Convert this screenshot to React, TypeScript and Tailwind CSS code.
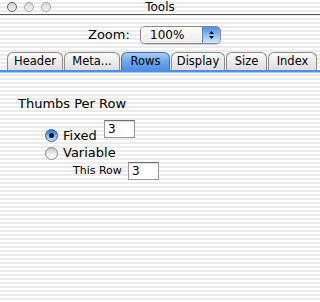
import React from 'react';

const tabs = [
  { label: 'Header', w: 'w-[56px]', active: false },
  { label: 'Meta...', w: 'w-[56px]', active: false },
  { label: 'Rows', w: 'w-[49px]', active: true },
  { label: 'Display', w: 'w-[54px]', active: false },
  { label: 'Size', w: 'w-[41px]', active: false },
  { label: 'Index', w: 'w-[49px]', active: false },
];

function Light() {
  return (
    <div className="w-[10px] h-[10px] rounded-full border border-[#a8a8a8] bg-gradient-to-b from-[#d8d8d8] to-[#f4f4f4]" />
  );
}

function Radio({ on }: { on: boolean }) {
  if (on) {
    return (
      <div className="w-[13px] h-[13px] rounded-full border border-[#3b5f9a] bg-gradient-to-b from-[#2f6fd0] via-[#7fb2f0] to-[#c8e2ff] flex items-center justify-center">
        <div className="w-[5px] h-[5px] rounded-full bg-[#101830]" />
      </div>
    );
  }
  return (
    <div className="w-[13px] h-[13px] rounded-full border border-[#8a8a8a] bg-gradient-to-b from-[#c4c4c4] via-[#ededed] to-white" />
  );
}

function Field({ value }: { value: string }) {
  return (
    <div className="w-[31px] h-[18px] bg-white border border-[#9a9a9a] border-t-[#6e6e6e] shadow-[inset_0_1px_1px_rgba(0,0,0,0.15)] text-[12px] leading-[16px] pl-[3px]">
      {value}
    </div>
  );
}

export default function App() {
  return (
    <div className="w-[320px] h-[302px] overflow-hidden text-black font-['DejaVu_Sans',sans-serif] bg-[repeating-linear-gradient(to_bottom,#ffffff_0px,#ffffff_2px,#ebebeb_2px,#ebebeb_4px)]">
      {/* title bar */}
      <div className="h-[15px] border-b border-[#5a5a5a] flex items-center">
        <div className="w-[60px] flex items-center gap-[7px] pl-[7px]">
          <div className="w-[10px] h-[10px] rounded-full border-[1.5px] border-[#606060] bg-gradient-to-b from-[#cfcfcf] to-[#f2f2f2]" />
          <Light />
          <Light />
        </div>
        <div className="flex-1 text-center text-[12px] leading-[14px]">Tools</div>
        <div className="w-[60px]" />
      </div>

      {/* zoom row */}
      <div className="flex items-center pl-[88px] pt-[11px] h-[36px] pb-[7px]">
        <span className="text-[13px] w-[52px]">Zoom:</span>
        <div className="w-[81px] h-[18px] rounded-[5px] border border-[#8a8a8a] flex overflow-hidden shadow-[0_1px_1px_rgba(0,0,0,0.2)]">
          <div className="flex-1 bg-gradient-to-b from-white to-[#ececec] text-[12px] leading-[16px] pl-[9px]">100%</div>
          <div className="w-[18px] border-l border-[#5b7fb5] bg-gradient-to-b from-[#4f8de0] via-[#8fbdf3] to-[#cfe6ff] flex flex-col items-center justify-center gap-[2px]">
            <svg width="5" height="3" viewBox="0 0 5 3"><path d="M2.5 0L5 3H0z" fill="#111" /></svg>
            <svg width="5" height="3" viewBox="0 0 5 3"><path d="M0 0h5L2.5 3z" fill="#111" /></svg>
          </div>
        </div>
      </div>

      {/* tabs */}
      <div className="flex items-end h-[19px] pl-[7px] gap-[1px]">
        {tabs.map((t) => (
          <div
            key={t.label}
            className={
              t.active
                ? `${t.w} h-[18px] rounded-t-[6px] border border-b-0 border-[#4a6fa8] bg-gradient-to-b from-[#a9cdf7] via-[#6ea6ec] to-[#4f90e6] text-[11.5px] leading-[17px] text-center`
                : `${t.w} h-[18px] rounded-t-[6px] border border-b-0 border-[#8c8c8c] bg-gradient-to-b from-[#fafafa] to-[#dedede] text-[11.5px] leading-[17px] text-center`
            }
          >
            {t.label}
          </div>
        ))}
      </div>
      <div className="h-[2px] bg-[#4f8ee6]" />
      <div className="h-[1px] bg-[#a9c8ef]" />

      {/* content */}
      <div className="pl-[18px] pt-[23px]">
        <div className="text-[13px] leading-[16px]">Thumbs Per Row</div>
        <div className="pl-[27px] pt-[8px]">
          <div className="flex items-start h-[24px]">
            <div className="flex items-center mt-[6px]">
              <Radio on />
              <span className="text-[13px] ml-[5px] w-[41px]">Fixed</span>
            </div>
            <Field value="3" />
          </div>
          <div className="flex items-center h-[18px]">
            <Radio on={false} />
            <span className="text-[13px] ml-[5px]">Variable</span>
          </div>
          <div className="flex items-center h-[18px] pl-[28px]">
            <span className="text-[11px] w-[55px]">This Row</span>
            <Field value="3" />
          </div>
        </div>
      </div>
    </div>
  );
}
